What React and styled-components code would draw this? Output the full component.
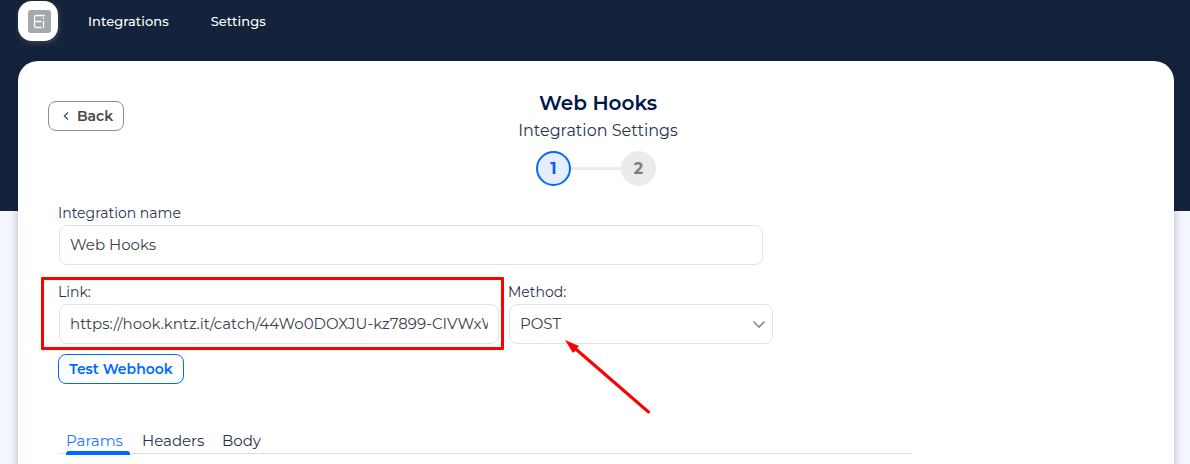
import React from 'react';
import styled, { createGlobalStyle } from 'styled-components';

const GlobalStyle = createGlobalStyle`
  *, *::before, *::after { box-sizing: border-box; }
  body { margin: 0; background: #f4f7ff; overflow: hidden; }
  body, button, input { font-family: Montserrat, Inter, "Open Sans", sans-serif; }
`;

const Page = styled.div`
  height: 464px;
  overflow: hidden;
  position: relative;
  background: linear-gradient(#14233c 211px, #f4f7ff 211px);
`;

const Header = styled.header`
  height: 61px;
  display: flex;
  align-items: flex-start;
  padding: 1px 18px 0;
`;

const Logo = styled.div`
  width: 40px;
  height: 40px;
  flex: none;
  border-radius: 14px;
  background: #fff;
  box-shadow: 1px 2px 5px rgba(110, 110, 110, 0.45);
  margin-right: 30px;
  svg { display: block; margin: 9px 0 0 10px; }
`;

const NavLink = styled.a`
  color: #fff;
  font-size: 13px;
  line-height: 20px;
  font-weight: 500;
  margin: 10px ${(p) => p.$gap || 0}px 0 0;
  letter-spacing: 0.05px;
`;

const Card = styled.main`
  margin: 0 16px 0 18px;
  height: 460px;
  border-radius: 20px;
  background: #fff;
  box-shadow: 0 0 10px rgba(20, 15, 75, 0.3);
  padding: 0 30px;
`;

const Top = styled.div`
  height: 140px;
  display: grid;
  grid-template-columns: 76px 1fr 76px;
`;

const OutlineButton = styled.button`
  width: ${(p) => p.$w}px;
  height: 30px;
  display: flex;
  align-items: center;
  justify-content: center;
  gap: 8px;
  padding: 0;
  background: #fff;
  border: 1px solid ${(p) => (p.$primary ? '#0069ff' : '#8d8d8d')};
  border-radius: 8px;
  color: ${(p) => (p.$primary ? '#0069ff' : '#484848')};
  font-size: 14px;
  font-weight: 600;
  white-space: nowrap;
`;

const BackButton = styled(OutlineButton)`
  margin-top: 40px;
  padding-left: 4px;
`;

const Heading = styled.div`
  display: flex;
  flex-direction: column;
  align-items: center;
`;

const Title = styled.h1`
  margin: 30px 0 0 4px;
  font-size: 20px;
  line-height: 24px;
  font-weight: 600;
  color: #00174a;
`;

const Subtitle = styled.div`
  margin: 4px 0 0 4px;
  font-size: 16px;
  line-height: 24px;
  font-weight: 400;
  color: #26344c;
`;

const Steps = styled.div`
  display: flex;
  align-items: center;
  margin-top: 8px;
`;

const Step = styled.div`
  width: 35px;
  height: 35px;
  border-radius: 50%;
  display: flex;
  align-items: center;
  justify-content: center;
  font-size: 16px;
  font-weight: 700;
  color: ${(p) => (p.$active ? '#0a5cff' : '#7e7e7e')};
  background: ${(p) => (p.$active ? '#e4eefe' : '#ebebeb')};
  border: 2px solid ${(p) => (p.$active ? '#0069ff' : '#ebebeb')};
`;

const Connector = styled.div`
  width: 50px;
  height: 3px;
  background: #ebebeb;
`;

const Form = styled.form`
  padding: 0 10px;
  width: 874px;
`;

const Row = styled.div`
  display: flex;
  gap: 9px;
  height: ${(p) => p.$h}px;
`;

const Field = styled.label`
  display: flex;
  flex-direction: column;
  width: ${(p) => p.$w}px;
`;

const Label = styled.span`
  height: 24px;
  line-height: 25px;
  font-size: 14px;
  font-weight: 400;
  color: #26344c;
`;

const Control = styled.span`
  display: flex;
  align-items: center;
  justify-content: space-between;
  height: 40px;
  margin-left: 1px;
  padding: 0 ${(p) => p.$end || 10}px 0 10px;
  border: 1px solid #e2e2e2;
  border-radius: 8px;
`;

const Value = styled.span`
  flex: 1;
  overflow: hidden;
  white-space: nowrap;
  font-size: 15px;
  line-height: 22px;
  font-weight: 400;
  color: #3b414c;
`;

const Tabs = styled.nav`
  display: flex;
  width: 854px;
  height: 26px;
  margin-top: 44px;
  padding-left: 8px;
  border-bottom: 1px solid #dedede;
`;

const Tab = styled.a`
  height: 27px;
  line-height: 25px;
  width: ${(p) => p.$w}px;
  font-size: 15px;
  font-weight: 400;
  color: ${(p) => (p.$active ? '#1a78ff' : '#26344c')};
  margin-right: 12px;
  position: relative;
  &::after {
    content: '';
    display: ${(p) => (p.$active ? 'block' : 'none')};
    position: absolute;
    left: 0;
    bottom: 0;
    width: 64px;
    height: 4px;
    border-radius: 3px 3px 0 0;
    background: #0069ff;
  }
`;

const Highlight = styled.div`
  position: absolute;
  left: 41px;
  top: 277px;
  width: 463px;
  height: 73px;
  border: 3px solid #fe0000;
  border-radius: 1px;
`;

const Arrow = styled.svg`
  position: absolute;
  left: 560px;
  top: 335px;
`;

export default function App() {
  return (
    <Page>
      <GlobalStyle />
      <Header>
        <Logo>
          <svg width="23" height="23" viewBox="0 0 23 23" fill="none">
            <rect width="23" height="23" rx="3" fill="#a3a8ab" />
            <path d="M16.8 5.5H8Q6.5 5.5 6.5 7V10Q6.5 11.5 8 11.5H13.5M6.5 11.5V16Q6.5 17.5 8 17.5H13.5M15.5 11V18M15.5 7.5V9.2" stroke="#fff" strokeWidth="1.3" />
          </svg>
        </Logo>
        <NavLink $gap={42}>Integrations</NavLink>
        <NavLink>Settings</NavLink>
      </Header>
      <Card>
        <Top>
          <BackButton $w={76}>
            <svg width="6" height="8" viewBox="0 0 6 8" fill="none">
              <path d="M5 0.5L1.3 4L5 7.5" stroke="#484848" strokeWidth="1.1" />
            </svg>
            Back
          </BackButton>
          <Heading>
            <Title>Web Hooks</Title>
            <Subtitle>Integration Settings</Subtitle>
            <Steps>
              <Step $active>1</Step>
              <Connector />
              <Step>2</Step>
            </Steps>
          </Heading>
        </Top>
        <Form>
          <Row $h={79}>
            <Field $w={705}>
              <Label>Integration name</Label>
              <Control><Value>Web Hooks</Value></Control>
            </Field>
          </Row>
          <Row $h={74}>
            <Field $w={441}>
              <Label>Link:</Label>
              <Control><Value>https://hook.kntz.it/catch/44Wo0DOXJU-kz7899-CIVWxW</Value></Control>
            </Field>
            <Field $w={265}>
              <Label>Method:</Label>
              <Control $end={6}>
                <Value>POST</Value>
                <svg width="14" height="9" viewBox="0 0 14 9" fill="none">
                  <path d="M1.5 1.5L7 7L12.5 1.5" stroke="#8b8b8b" strokeWidth="1.6" />
                </svg>
              </Control>
            </Field>
          </Row>
          <OutlineButton type="button" $primary $w={126}>Test Webhook</OutlineButton>
          <Tabs>
            <Tab $active $w={64}>Params</Tab>
            <Tab $w={68}>Headers</Tab>
            <Tab $w={50}>Body</Tab>
          </Tabs>
        </Form>
      </Card>
      <Highlight />
      <Arrow width="95" height="85" viewBox="0 0 95 85">
        <path d="M88.5 77L14 12.5" stroke="#fe0000" strokeWidth="3" strokeLinecap="round" />
        <path d="M5 5L19 11L17.5 12.5L15 16.5L12.8 17.8Z" fill="#fe0000" />
      </Arrow>
    </Page>
  );
}
